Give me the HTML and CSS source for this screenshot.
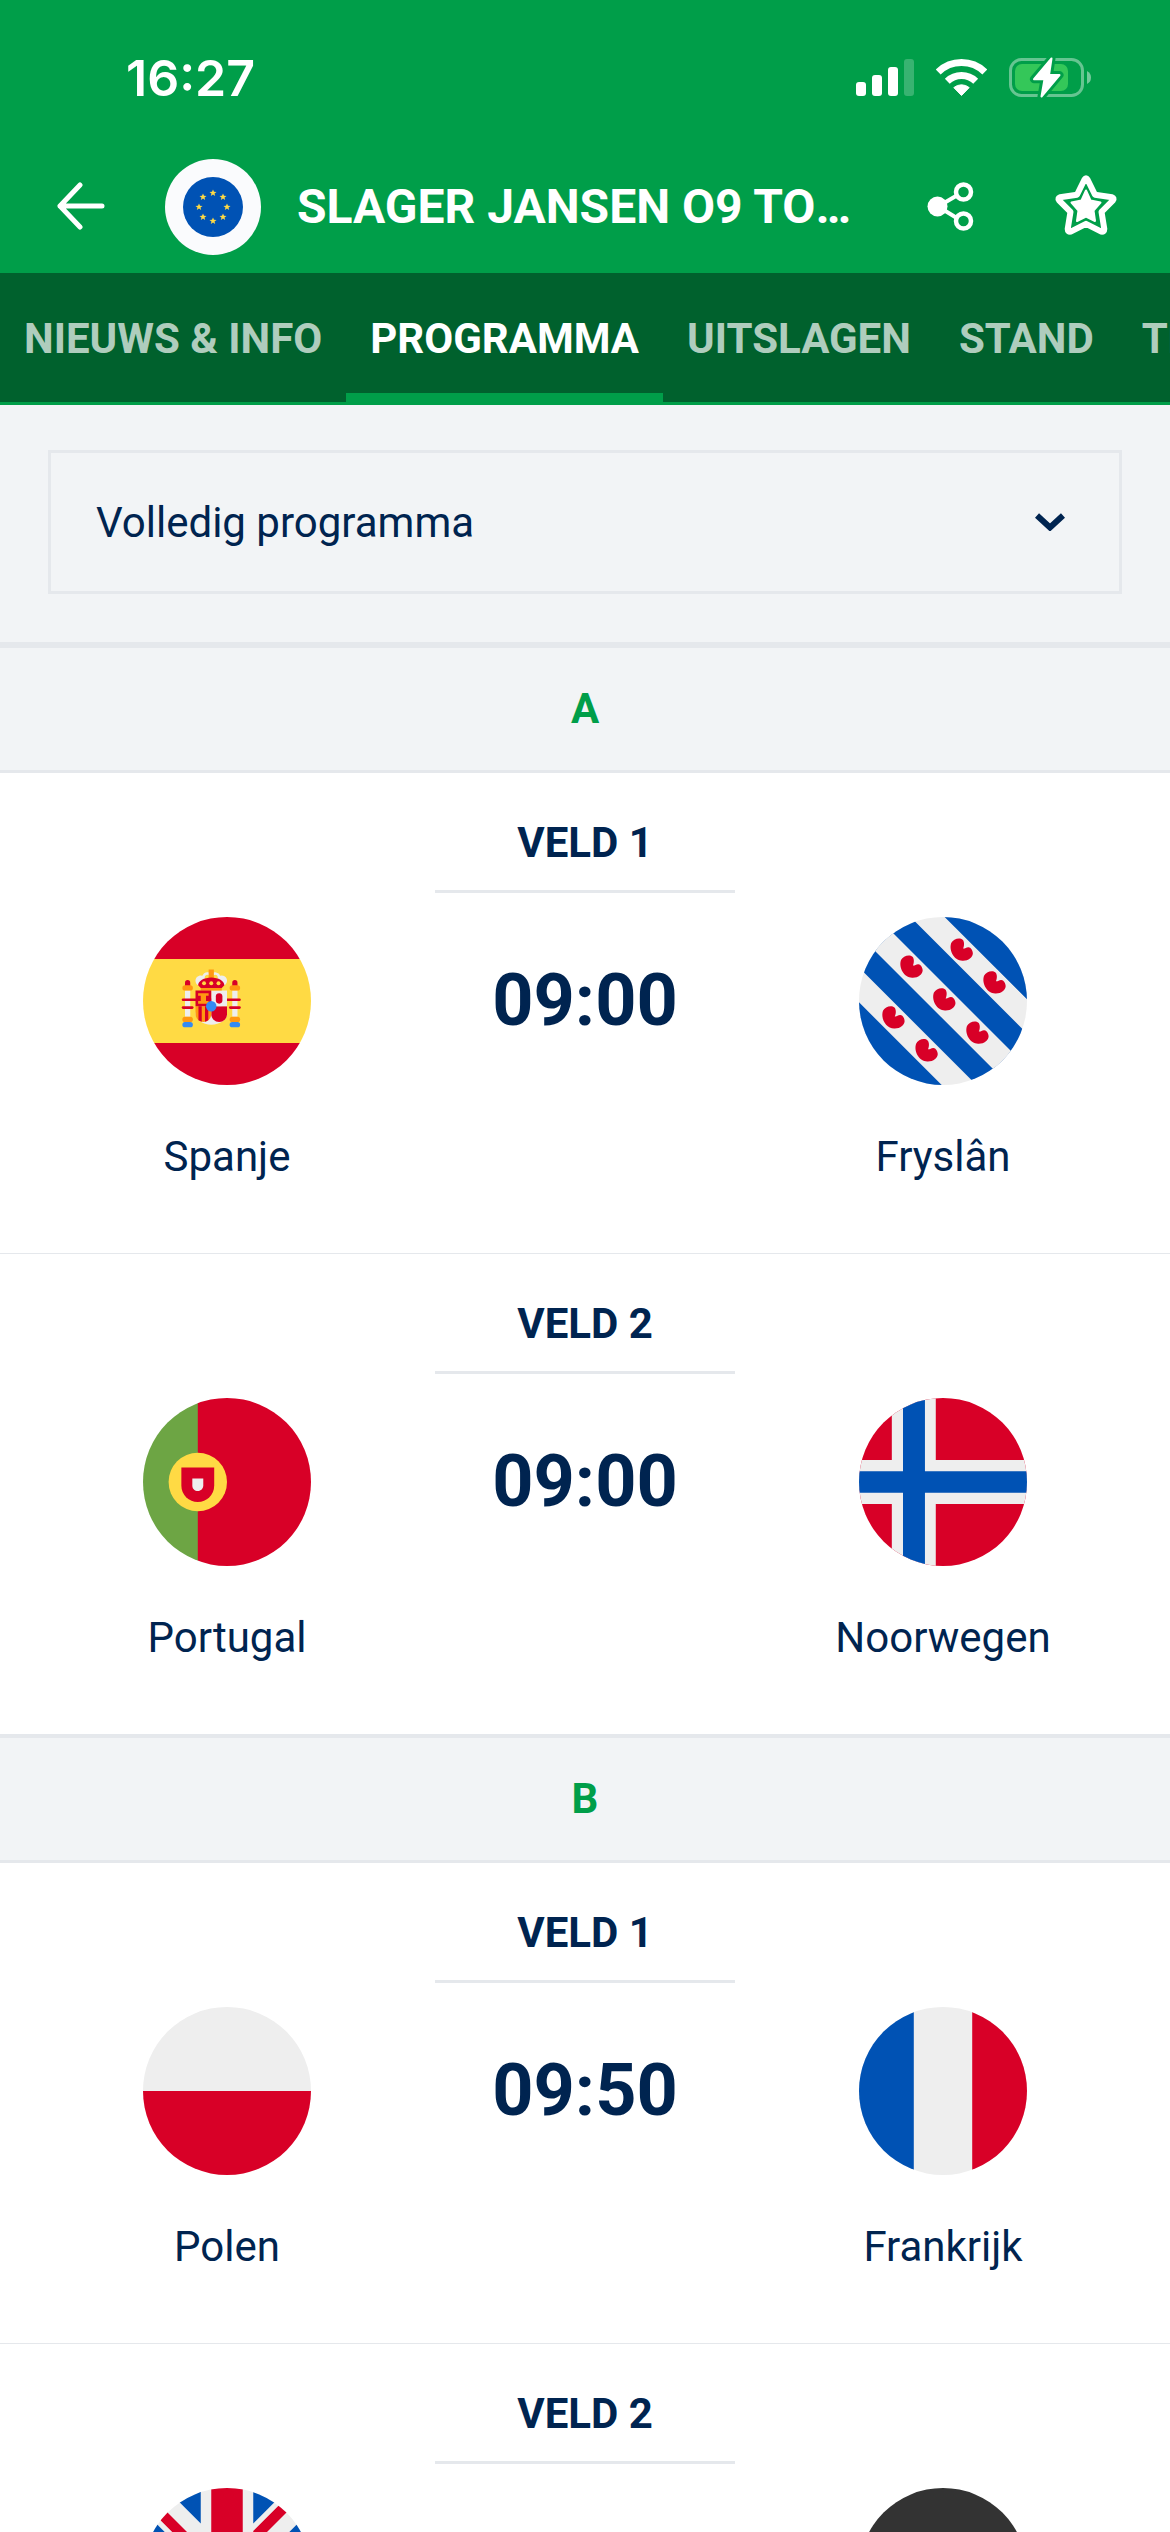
FILE: index.html
```html
<!DOCTYPE html>
<html lang="nl">
<head>
<meta charset="utf-8">
<meta name="viewport" content="width=device-width, initial-scale=1">
<title>Programma</title>
<link rel="stylesheet" href="styles.css">
</head>
<body>
<div class="app">
  <header class="header">
    <div class="status">
      <span class="clock">16:27</span>
      <div class="status-icons">
        <svg width="58" height="38" viewBox="0 0 58 38" fill="#fff" aria-hidden="true">
          <rect x="0" y="23" width="10" height="14" rx="3"/>
          <rect x="16" y="16" width="10" height="21" rx="3"/>
          <rect x="32" y="8" width="10" height="29" rx="3"/>
          <rect x="48" y="0" width="10" height="37" rx="3" opacity=".22"/>
        </svg>
        <svg width="51" height="38" viewBox="0 0 51 38" fill="none" stroke="#fff" stroke-width="7" aria-hidden="true">
          <path d="M2.2 13a33.5 33.5 0 0 1 46.600 0"/>
          <path d="M11.300 22.300a20.500 20.500 0 0 1 28.400 0"/>
          <path d="M17.800 28.600a12 12 0 0 1 15.400 0L25.500 36.500z" fill="#fff" stroke="#fff" stroke-width="1" stroke-linejoin="round"/>
        </svg>
        <svg width="82" height="42" viewBox="0 0 82 42" aria-hidden="true">
          <rect x="1.500" y="2.500" width="72" height="36" rx="11" fill="none" stroke="#fff" stroke-opacity=".4" stroke-width="3"/>
          <path d="M78 14q4 2 4 6.500t-4 6.500z" fill="#fff" fill-opacity=".45"/>
          <rect x="6" y="7" width="53" height="27" rx="7" fill="#34c759"/>
          <path id="bolt" d="M42.500 1.500 25 22.200H35.500L32.500 39.500 50.500 18H40z" fill="#009e49" stroke="#009e49" stroke-width="8" stroke-linejoin="round"/>
          <path d="M42.500 1.500 25 22.200H35.500L32.500 39.500 50.500 18H40z" fill="#fff" stroke="#fff" stroke-width="2" stroke-linejoin="round"/>
        </svg>
      </div>
    </div>
    <div class="appbar">
      <button class="back" type="button" aria-label="Terug">
        <svg width="48" height="50" viewBox="0 0 48 50" fill="none" stroke="#fff" stroke-width="5" stroke-linecap="round" stroke-linejoin="round" aria-hidden="true"><path d="M45 24H3M23 3 3 24l20 21"/></svg>
      </button>
      <span class="emblem">
        <svg width="60" height="60" viewBox="0 0 60 60" aria-hidden="true">
          <defs><path id="eu-star" d="M0-3.600 1-1.200 3.500-1.100 1.500.5 2.200 3 0 1.600-2.200 3-1.500.5-3.500-1.100-1-1.200z"/></defs>
          <circle cx="30" cy="30" r="30" fill="#0052b4"/>
          <g fill="#ffda44">
            <use href="#eu-star" x="30" y="16"/><use href="#eu-star" x="40" y="20"/>
            <use href="#eu-star" x="44" y="30"/><use href="#eu-star" x="40" y="40"/>
            <use href="#eu-star" x="30" y="44"/><use href="#eu-star" x="20" y="40"/>
            <use href="#eu-star" x="16" y="30"/><use href="#eu-star" x="20" y="20"/>
          </g>
        </svg>
      </span>
      <h1 class="title">SLAGER JANSEN O9 TOERNOOI</h1>
      <div class="actions">
        <button class="action" type="button" aria-label="Delen">
          <svg width="48" height="52" viewBox="0 0 48 52" fill="none" stroke="#fff" stroke-width="4.500" aria-hidden="true">
            <path d="M12 25.500 30 15M12 25.500 30 36.500" stroke-width="4"/>
            <circle cx="11.500" cy="25.500" r="10" fill="#fff" stroke="none"/>
            <circle cx="37.500" cy="11" r="7.500"/><circle cx="37.500" cy="40" r="7.500"/>
          </svg>
        </button>
        <button class="action" type="button" aria-label="Favoriet">
          <svg width="64" height="66" viewBox="0 0 64 66" stroke="#fff" stroke-linejoin="round" aria-hidden="true">
            <path d="M30.500 5.500q1.500-2.500 3 0L41 20.800 58 23.300q2.500 1 1 3L47.500 37.800 50.300 55q0 3-3 2.600L32 49.800 16.700 57.600q-3 .4-3-2.600L16.500 37.800 5 26.300q-1.500-2 1-3L23 20.800z" fill="none" stroke-width="6"/>
            <path d="M32 16.500 36.500 26.500 46.500 28.500 39.500 36.500 41 47 32 42.500 23 47 24.500 36.500 17.500 28.500 27.500 26.500z" fill="#fff" stroke-width="2"/>
          </svg>
        </button>
      </div>
    </div>
  </header>

  <nav class="tabs" aria-label="Onderdelen">
    <a class="tab" href="#nieuws">NIEUWS &amp; INFO</a>
    <a class="tab tab-active" href="#programma" aria-current="page">PROGRAMMA</a>
    <a class="tab" href="#uitslagen">UITSLAGEN</a>
    <a class="tab" href="#stand">STAND</a>
    <a class="tab" href="#teams">TEAMS</a>
  </nav>

  <main class="content">
    <div class="filter">
      <div class="select">
        <select class="select-field" aria-label="Programma kiezen">
          <option>Volledig programma</option>
        </select>
        <svg class="chevron" width="30" height="18" viewBox="0 0 30 18" fill="none" stroke="#002450" stroke-width="6" aria-hidden="true"><path d="M2 2.500 15 14.500 28 2.500"/></svg>
      </div>
    </div>

    <section>
      <h2 class="group">A</h2>
      <article class="match">
        <h3 class="field">VELD 1</h3>
        <svg class="flag home" viewBox="0 0 512 512" aria-hidden="true">
          <path fill="#ffda44" d="M0 128h512v256H0z"/>
          <path fill="#d80027" d="M0 0h512v128H0zm0 384h512v128H0z"/>
          <g fill="#eee"><path d="M144 304h-16v-80h16zm128 0h16v-80h-16z"/><ellipse cx="208" cy="296" rx="48" ry="32"/></g>
          <g fill="#d80027"><rect width="16" height="24" x="128" y="192" rx="8"/><rect width="16" height="24" x="272" y="192" rx="8"/><path d="M208 272v24a24 24 0 0 0 48 0v-24z"/></g>
          <g fill="#ff9811"><rect width="32" height="16" x="120" y="208" rx="8"/><rect width="32" height="16" x="264" y="208" rx="8"/><rect width="32" height="16" x="120" y="304" rx="8"/><rect width="32" height="16" x="264" y="304" rx="8"/><path d="M160 272v24a24 24 0 0 0 48 0v-24z"/></g>
          <g fill="#d80027"><rect x="118" y="248" width="180" height="8" rx="4"/><rect x="118" y="272" width="36" height="8" rx="4"/><rect x="262" y="272" width="36" height="8" rx="4"/></g>
          <path fill="#eee" d="M196 168c-7 0-13 5-15 11l-5-1c-9 0-16 7-16 16s7 16 16 16c7 0 13-4 15-11a16 16 0 0 0 17-4 16 16 0 0 0 17 4 16 16 0 1 0 10-20 16 16 0 0 0-27-5c-3-4-7-6-12-6zm0 8c5 0 8 4 8 8 0 5-3 8-8 8-4 0-8-3-8-8 0-4 4-8 8-8zm24 0c5 0 8 4 8 8 0 5-3 8-8 8-4 0-8-3-8-8 0-4 4-8 8-8z"/>
          <path fill="#ff9811" d="M200 160h16v32h-16z"/>
          <path fill="#eee" d="M208 224h48v48h-48z"/>
          <path fill="#ff9811" d="M176 216h64v8h-64z"/>
          <path fill="#d80027" d="m248 208-8 8h-64l-8-8c0-13 18-24 40-24s40 11 40 24zm-88 16h48v48h-48z"/>
          <rect width="20" height="32" x="222" y="232" fill="#d80027" rx="10"/>
          <path fill="#ff9811" d="M168 232v8h8v16h-8v8h32v-8h-8v-16h8v-8z"/>
          <g fill="#ffda44"><circle cx="186" cy="202" r="6"/><circle cx="208" cy="202" r="6"/><circle cx="230" cy="202" r="6"/></g>
          <path fill="#d80027" d="M169 272v43a24 24 0 0 0 10 4v-47zm20 0v47a24 24 0 0 0 10-4v-43z"/>
          <g fill="#338af3"><circle cx="208" cy="272" r="16"/><rect width="32" height="16" x="264" y="320" rx="8"/><rect width="32" height="16" x="120" y="320" rx="8"/></g>
        </svg>
        <time class="time">09:00</time>
        <svg class="flag away" viewBox="0 0 512 512" aria-hidden="true">
          <defs><path id="leaf" d="M4-3C8-10 9-24 3-30-6-38-26-33-32-20-40 4-22 34 2 34 20 35 33 24 34 12 34 2 27-8 20-7 13-6 10-2 4-3z"/></defs>
          <path fill="#eee" d="M0 0h512v512H0z"/>
          <path fill="#0052b4" d="M261 0H512V251zM54 0H157L512 355V458zM0 54V-54L54 0 512 458V512H458L0 55zM0 55V154L358 512H458zM0 260V512H252z"/>
          <path fill="#eee" d="M-60-114 54 0 566 512 512 566-54 0z"/>
          <path fill="#eee" d="M0-54 566 512H458L-54 0z"/>
          <g fill="#d80027">
            <use href="#leaf" x="313" y="99"/><use href="#leaf" x="413" y="199"/>
            <use href="#leaf" x="160" y="151"/><use href="#leaf" x="260" y="251"/><use href="#leaf" x="361" y="352"/>
            <use href="#leaf" x="105" y="306"/><use href="#leaf" x="206" y="406"/>
          </g>
        </svg>
        <span class="team home">Spanje</span>
        <span class="team away">Fryslân</span>
      </article>
      <article class="match">
        <h3 class="field">VELD 2</h3>
        <svg class="flag home" viewBox="0 0 512 512" aria-hidden="true">
          <path fill="#6da544" d="M0 0h168v512H0z"/><path fill="#d80027" d="M167 0h345v512H167z"/>
          <circle cx="167" cy="256" r="89" fill="#ffda44"/>
          <path fill="#d80027" d="M116.900 211.500V267a50 50 0 1 0 100.100 0v-55.500z"/>
          <path fill="#eee" d="M167 283.800c-9.200 0-16.700-7.500-16.700-16.700V245h33.400v22c0 9.200-7.500 16.800-16.700 16.800z"/>
        </svg>
        <time class="time">09:00</time>
        <svg class="flag away" viewBox="0 0 512 512" aria-hidden="true">
          <path fill="#d80027" d="M0 0h512v512H0z"/>
          <path fill="#eee" d="M100 0h134v189h278v134H234v189H100V323H0V189h100z"/>
          <path fill="#0052b4" d="M134 0h67v223h311v66H201v223h-67V289H0v-66h134z"/>
        </svg>
        <span class="team home">Portugal</span>
        <span class="team away">Noorwegen</span>
      </article>
    </section>

    <section>
      <h2 class="group">B</h2>
      <article class="match">
        <h3 class="field">VELD 1</h3>
        <svg class="flag home" viewBox="0 0 512 512" aria-hidden="true">
          <path fill="#eee" d="M0 0h512v256H0z"/><path fill="#d80027" d="M0 256h512v256H0z"/>
        </svg>
        <time class="time">09:50</time>
        <svg class="flag away" viewBox="0 0 512 512" aria-hidden="true">
          <path fill="#eee" d="M0 0h512v512H0z"/><path fill="#0052b4" d="M0 0h167v512H0z"/><path fill="#d80027" d="M345 0h167v512H345z"/>
        </svg>
        <span class="team home">Polen</span>
        <span class="team away">Frankrijk</span>
      </article>
      <article class="match">
        <h3 class="field">VELD 2</h3>
        <svg class="flag home" viewBox="0 0 512 512" aria-hidden="true">
          <path fill="#eee" d="M0 0h512v512H0z"/>
          <path fill="#0052b4" d="M336 0v108L444 0Zm176 68L404 176h108zM0 176h108L0 68ZM68 0l108 108V0Zm108 512V404L68 512ZM0 444l108-108H0Zm512-108H404l108 108Zm-68 176L336 404v108z"/>
          <path fill="#d80027" d="M0 0v45l131 131h45L0 0zm208 0v208H0v96h208v208h96V304h208v-96H304V0zm259 0L336 131v45L512 0zM176 336 0 512h45l131-131zm160 0 176 176v-45L381 336z"/>
        </svg>
        <svg class="flag away" viewBox="0 0 512 512" aria-hidden="true">
          <path fill="#333" d="M0 0h512v167H0z"/><path fill="#d80027" d="M0 167h512v178H0z"/><path fill="#ffda44" d="M0 345h512v167H0z"/>
        </svg>
      </article>
    </section>
  </main>
</div>
</body>
</html>
```
FILE: styles.css
```css
:root {
  --green: #009e49;
  --green-dark: #00612d;
  --navy: #002450;
  --line: #e5e8ec;
  --grey: #f2f4f6;
}

* {
  box-sizing: border-box;
}

body {
  margin: 0;
  background: #fff;
  color: var(--navy);
  font-family: Roboto, "Liberation Sans", sans-serif;
  font-size: 42px;
}

h1,
h2,
h3 {
  margin: 0;
  font-weight: 700;
}

svg {
  display: block;
  flex: none;
}

button {
  display: flex;
  align-items: center;
  justify-content: center;
  flex: none;
  padding: 0;
  border: 0;
  background: none;
}

.app {
  display: flex;
  flex-direction: column;
  height: 100vh;
  overflow: hidden;
}

/* Header */
.header {
  flex: none;
  background: var(--green);
  color: #fff;
}

.status {
  display: flex;
  align-items: center;
  justify-content: space-between;
  height: 141px;
  padding: 15px 79px 0 126px;
}

.clock {
  font-family: Inter, "Liberation Sans", sans-serif;
  font-size: 50px;
  font-weight: 600;
}

.status-icons {
  display: flex;
  align-items: center;
  gap: 22px;
}

.appbar {
  display: flex;
  align-items: center;
  height: 132px;
  padding: 0 36px 0 57px;
}

.emblem {
  display: flex;
  align-items: center;
  justify-content: center;
  flex: none;
  width: 96px;
  height: 96px;
  margin: 0 36px 0 60px;
  border-radius: 50%;
  background: #fafbfd;
}

.title {
  flex: 1;
  min-width: 0;
  overflow: hidden;
  font-size: 48px;
  line-height: 60px;
  text-overflow: ellipsis;
  white-space: nowrap;
}

.actions {
  display: flex;
  flex: none;
  gap: 40px;
  margin-left: 36px;
}

.action {
  width: 96px;
  height: 96px;
}

/* Tabs */
.tabs {
  display: flex;
  flex: none;
  overflow: hidden;
  border-bottom: 3px solid var(--green);
  background: var(--green-dark);
}

.tab {
  flex: none;
  padding: 0 24px;
  border-bottom: 9px solid transparent;
  color: rgba(255, 255, 255, 0.7);
  font-weight: 700;
  line-height: 120px;
  padding-top: 6px;
  height: 129px;
  text-decoration: none;
  white-space: nowrap;
}

.tab-active {
  border-bottom-color: var(--green);
  color: #fff;
}

/* Content */
.content {
  flex: 1;
  min-height: 0;
  overflow: hidden;
}

.filter {
  padding: 45px 48px 48px;
  border-bottom: 3px solid var(--line);
  background: var(--grey);
}

.select {
  display: grid;
  align-items: center;
}

.select-field {
  grid-area: 1 / 1;
  width: 100%;
  height: 144px;
  padding: 0 45px;
  border: 3px solid var(--line);
  border-radius: 0;
  background: var(--grey);
  color: var(--navy);
  font: inherit;
  appearance: none;
}

.chevron {
  grid-area: 1 / 1;
  justify-self: end;
  margin-right: 57px;
  pointer-events: none;
}

.group {
  border: solid var(--line);
  border-width: 3px 0;
  background: var(--grey);
  color: var(--green);
  font-size: 42px;
  line-height: 122px;
  text-align: center;
}

.match {
  display: grid;
  grid-template-columns: 1fr 300px 1fr;
  grid-template-rows: 120px 168px 56px;
  row-gap: 24px;
  justify-items: center;
  align-items: center;
  height: 481px;
  padding: 0 19px;
  border-bottom: 1px solid var(--line);
}

.match {
  align-content: start;
}

.field {
  grid-area: 1 / 2;
  width: 100%;
  padding: 41px 0 18px;
  border-bottom: 3px solid var(--line);
  font-size: 42px;
  line-height: 58px;
  text-align: center;
}

.flag {
  grid-row: 2;
  width: 168px;
  height: 168px;
  border-radius: 50%;
}

.time {
  grid-area: 2 / 2;
  font-size: 72px;
  font-weight: 700;
  line-height: 84px;
}

.team {
  grid-row: 3;
  margin-top: 40px;
  line-height: 56px;
}

.home {
  grid-column: 1;
}

.away {
  grid-column: 3;
}
```
